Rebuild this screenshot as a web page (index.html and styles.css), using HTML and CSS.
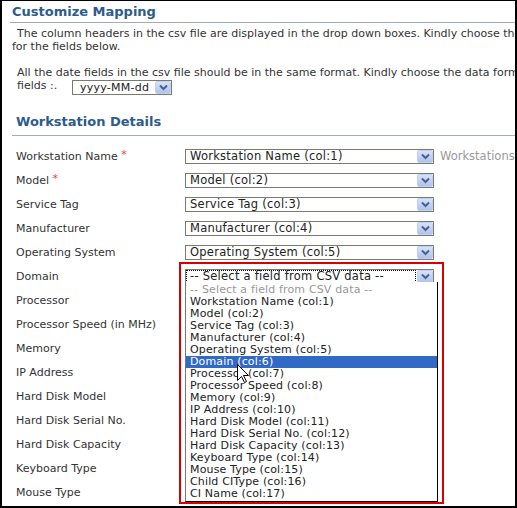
FILE: index.html
```html
<!DOCTYPE html>
<html>
<head>
<meta charset="utf-8">
<title>Customize Mapping</title>
<link rel="stylesheet" href="styles.css">
</head>
<body>
<div class="frame">
  <div class="page">
    <h1 class="title">Customize Mapping</h1>
    <p class="intro">The column headers in the csv file are displayed in the drop down boxes. Kindly choose the appropriate column<br>for the fields below.</p>
    <div class="datefmt">
      <div>All the date fields in the csv file should be in the same format. Kindly choose the data format for the date</div>
      <div class="fmt-line">
        <span class="fmt-label">fields :.</span>
        <div class="select select-small"><span class="value">yyyy-MM-dd</span><span class="arrow"><svg viewBox="0 0 15 13" width="15" height="13"><path d="M4 4.5 L7.5 8 L11 4.5" fill="none" stroke="#4d6185" stroke-width="2"/></svg></span></div>
      </div>
    </div>
    <h2 class="section">Workstation Details</h2>
    <div class="rows">
      <div class="row"><span class="label">Workstation Name <span class="req">*</span></span><div class="select"><span class="value">Workstation Name (col:1)</span><span class="arrow"><svg viewBox="0 0 15 13" width="15" height="13"><path d="M4 4.5 L7.5 8 L11 4.5" fill="none" stroke="#4d6185" stroke-width="2"/></svg></span></div><span class="hint">Workstations</span></div>
      <div class="row"><span class="label">Model <span class="req">*</span></span><div class="select"><span class="value">Model (col:2)</span><span class="arrow"><svg viewBox="0 0 15 13" width="15" height="13"><path d="M4 4.5 L7.5 8 L11 4.5" fill="none" stroke="#4d6185" stroke-width="2"/></svg></span></div></div>
      <div class="row"><span class="label">Service Tag</span><div class="select"><span class="value">Service Tag (col:3)</span><span class="arrow"><svg viewBox="0 0 15 13" width="15" height="13"><path d="M4 4.5 L7.5 8 L11 4.5" fill="none" stroke="#4d6185" stroke-width="2"/></svg></span></div></div>
      <div class="row"><span class="label">Manufacturer</span><div class="select"><span class="value">Manufacturer (col:4)</span><span class="arrow"><svg viewBox="0 0 15 13" width="15" height="13"><path d="M4 4.5 L7.5 8 L11 4.5" fill="none" stroke="#4d6185" stroke-width="2"/></svg></span></div></div>
      <div class="row"><span class="label">Operating System</span><div class="select"><span class="value">Operating System (col:5)</span><span class="arrow"><svg viewBox="0 0 15 13" width="15" height="13"><path d="M4 4.5 L7.5 8 L11 4.5" fill="none" stroke="#4d6185" stroke-width="2"/></svg></span></div></div>
      <div class="row"><span class="label">Domain</span><div class="select focused"><span class="value focus-ring">-- Select a field from CSV data --</span><span class="arrow"><svg viewBox="0 0 15 13" width="15" height="13"><path d="M4 4.5 L7.5 8 L11 4.5" fill="none" stroke="#4d6185" stroke-width="2"/></svg></span></div></div>
      <div class="row"><span class="label">Processor</span></div>
      <div class="row"><span class="label">Processor Speed (in MHz)</span></div>
      <div class="row"><span class="label">Memory</span></div>
      <div class="row"><span class="label">IP Address</span></div>
      <div class="row"><span class="label">Hard Disk Model</span></div>
      <div class="row"><span class="label">Hard Disk Serial No.</span></div>
      <div class="row"><span class="label">Hard Disk Capacity</span></div>
      <div class="row"><span class="label">Keyboard Type</span></div>
      <div class="row"><span class="label">Mouse Type</span></div>
    </div>
  </div>

  <ul class="listbox">
    <li class="placeholder">-- Select a field from CSV data --</li>
    <li>Workstation Name (col:1)</li>
    <li>Model (col:2)</li>
    <li>Service Tag (col:3)</li>
    <li>Manufacturer (col:4)</li>
    <li>Operating System (col:5)</li>
    <li class="selected">Domain (col:6)</li>
    <li>Processor (col:7)</li>
    <li>Processor Speed (col:8)</li>
    <li>Memory (col:9)</li>
    <li>IP Address (col:10)</li>
    <li>Hard Disk Model (col:11)</li>
    <li>Hard Disk Serial No. (col:12)</li>
    <li>Hard Disk Capacity (col:13)</li>
    <li>Keyboard Type (col:14)</li>
    <li>Mouse Type (col:15)</li>
    <li>Child CIType (col:16)</li>
    <li>CI Name (col:17)</li>
  </ul>
  <div class="highlight-box"></div>
  <svg class="cursor" width="13" height="20" viewBox="0 0 13 20"><path d="M0.5 0.5 L0.5 16.5 L4.5 12.5 L7.5 18.5 L9.5 17.5 L6.5 11.5 L11.5 11.5 Z" fill="#fff" stroke="#000" stroke-width="1"/></svg>
</div>
</body>
</html>
```

FILE: styles.css
```css
body {
  margin: 0;
  font-family: "DejaVu Sans", Verdana, sans-serif;
  background: #fff;
}

.frame {
  position: relative;
  width: 517px;
  height: 508px;
  box-sizing: border-box;
  border-style: solid;
  border-color: #000;
  border-width: 1px 2px 2px 2px;
  overflow: hidden;
  background: #fff;
}

.page {
  width: 760px;
  font-size: 11px;
  line-height: 13px;
  color: #333;
}

.title {
  margin: 3px 0 0 8px;
  padding: 0 0 2px 2px;
  font-size: 13px;
  line-height: 16px;
  font-weight: bold;
  color: #2d5b8c;
  border-bottom: 1px solid #a4acb8;
}

.intro {
  margin: 4px 0 0 10px;
  text-indent: 5px;
}

.datefmt {
  margin: 13px 0 0 15px;
}

.fmt-line {
  display: flex;
  align-items: flex-start;
}

.fmt-label {
  width: 55px;
  flex: none;
}

.select {
  width: 249px;
  height: 15px;
  box-sizing: border-box;
  border: 1px solid #7a7a6e;
  background: #fff;
  display: flex;
  align-items: center;
  flex: none;
  font-size: 11.5px;
  letter-spacing: 0.25px;
  line-height: 13px;
  color: #222;
}

.select-small {
  width: 100px;
  margin-top: 1px;
}

.select .value {
  padding-left: 4px;
  white-space: nowrap;
  flex: 1;
}

.select-small .value {
  padding-left: 7px;
  font-size: 11px;
}

.focus-ring {
  align-self: stretch;
  outline: 1px dotted #000;
  outline-offset: -1px;
  line-height: 13px;
}

.arrow {
  flex: none;
  width: 16px;
  height: 13px;
  margin: 0 0 0 1px;
  box-sizing: border-box;
  border: 1px solid #c3d1f1;
  border-radius: 2px;
  background: linear-gradient(#d6e1fa, #aec3f1);
  display: flex;
  align-items: center;
  justify-content: center;
  overflow: hidden;
}

.arrow svg {
  flex: none;
}

.section {
  margin: 19px 0 0 10px;
  padding: 0 0 5px 4px;
  font-size: 13px;
  line-height: 16px;
  font-weight: bold;
  color: #2d5b8c;
  border-bottom: 1px solid #a4acb8;
}

.rows {
  margin-top: 8px;
}

.row {
  display: flex;
  align-items: center;
  height: 24px;
  padding-left: 14px;
}

.label {
  width: 169px;
  flex: none;
  white-space: nowrap;
}

.req {
  color: #ee3a3a;
  position: relative;
  top: -2px;
}

.hint {
  margin-left: 6px;
  color: #999;
  font-size: 11.5px;
  white-space: nowrap;
}

.listbox {
  position: absolute;
  left: 183px;
  top: 281px;
  width: 253px;
  margin: 0;
  padding: 2px 0 0 0;
  box-sizing: border-box;
  height: 220px;
  list-style: none;
  background: #fff;
  border-left: 1px solid #777;
  border-right: 1px solid #000;
  border-bottom: 1px solid #000;
  font-size: 11px;
  letter-spacing: 0.15px;
  line-height: 12px;
  color: #222;
}

.listbox li {
  padding-left: 4px;
  white-space: nowrap;
}

.listbox .placeholder {
  color: #999;
}

.listbox .selected {
  background: #316ac5;
  color: #fff;
}

.highlight-box {
  position: absolute;
  left: 177px;
  top: 261px;
  width: 265px;
  height: 242px;
  box-sizing: border-box;
  border: 2px solid #d80000;
}

.cursor {
  position: absolute;
  left: 235px;
  top: 363px;
}
```
